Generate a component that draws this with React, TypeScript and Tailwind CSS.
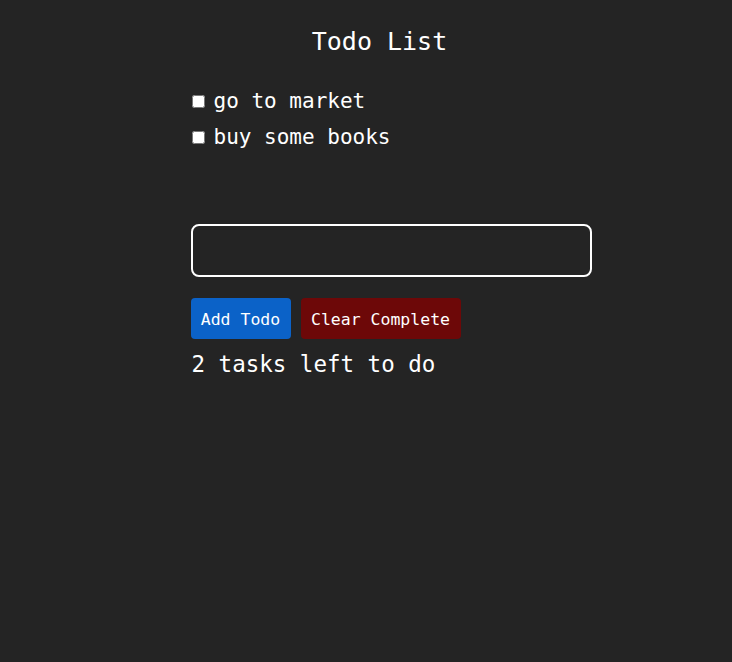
import React, { useState } from 'react';

interface Todo {
  id: number;
  text: string;
  done: boolean;
}

const App: React.FC = () => {
  const [todos, setTodos] = useState<Todo[]>([
    { id: 1, text: 'go to market', done: false },
    { id: 2, text: 'buy some books', done: false }
  ]);
  const [input, setInput] = useState('');

  const addTodo = () => {
    if (!input.trim()) return;
    setTodos([...todos, { id: Date.now(), text: input.trim(), done: false }]);
    setInput('');
  };

  const toggle = (id: number) => {
    setTodos(todos.map(t => (t.id === id ? { ...t, done: !t.done } : t)));
  };

  const clearComplete = () => setTodos(todos.filter(t => !t.done));

  const left = todos.filter(t => !t.done).length;

  return (
    <div className="min-h-[662px] bg-[#242424] text-white font-['DejaVu_Sans_Mono',monospace]">
      <div className="pt-[24px] pl-[27px] text-center text-[25px] leading-[36px]">Todo List</div>
      <div className="pl-[50px] flex justify-center">
        <div className="w-[401px]">
          {/* Todo items */}
          <ul className="mt-[24px]">
            {todos.map(todo => (
              <li key={todo.id} className="flex items-center h-[36px] text-[21px]">
                <input
                  type="checkbox"
                  checked={todo.done}
                  onChange={() => toggle(todo.id)}
                  className="w-[13px] h-[13px] ml-[1px] mr-[9px] -mt-[1px] accent-white"
                />
                <span>{todo.text}</span>
              </li>
            ))}
          </ul>

          <input
            type="text"
            value={input}
            onChange={e => setInput(e.target.value)}
            className="mt-[68px] w-full h-[53px] rounded-[8px] border-2 border-white bg-transparent px-3 text-[20px] outline-none"
          />

          <div className="flex gap-[10px] mt-[21px]">
            <button
              type="button"
              onClick={addTodo}
              className="w-[100px] h-[41px] pt-[3px] rounded-[4px] bg-[#0b62c8] text-[16.5px] text-white"
            >
              Add Todo
            </button>
            <button
              type="button"
              onClick={clearComplete}
              className="w-[160px] h-[41px] pt-[3px] rounded-[4px] bg-[#6d0808] text-[16.5px] text-white"
            >
              Clear Complete
            </button>
          </div>

          <div className="mt-[8px] text-[22.5px] leading-[34px] pl-[1px]">{left} tasks left to do</div>
        </div>
      </div>
    </div>
  );
};

export default App;
